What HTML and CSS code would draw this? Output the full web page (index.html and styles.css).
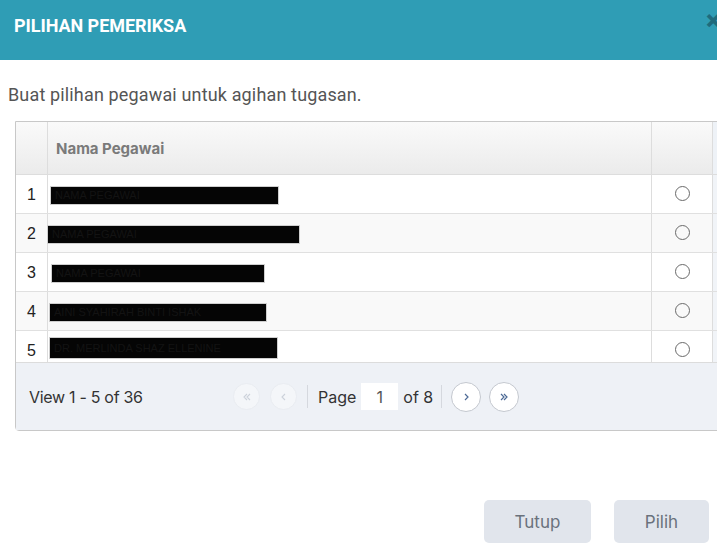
FILE: index.html
```html
<!DOCTYPE html>
<html lang="ms">
<head>
<meta charset="utf-8">
<title>Pilihan Pemeriksa</title>
<link rel="stylesheet" href="styles.css">
</head>
<body>
<div class="modal">
  <div class="modal-header">
    <h4 class="modal-title">PILIHAN PEMERIKSA</h4>
    <span class="close">×</span>
  </div>
  <div class="modal-body">
    <p class="intro">Buat pilihan pegawai untuk agihan tugasan.</p>
    <div class="grid">
      <div class="grid-head">
        <div class="cell c-num"></div>
        <div class="cell c-name">Nama Pegawai</div>
        <div class="cell c-radio"></div>
        <div class="cell c-gutter"></div>
      </div>
      <div class="grid-body">
        <div class="row">
          <div class="cell c-num">1</div>
          <div class="cell c-name"><span class="redact" style="width:227px;margin-left:3px">NAMA PEGAWAI</span></div>
          <div class="cell c-radio"><span class="radio"></span></div>
          <div class="cell c-gutter"></div>
        </div>
        <div class="row alt">
          <div class="cell c-num">2</div>
          <div class="cell c-name"><span class="redact" style="width:251px;margin-left:0">NAMA PEGAWAI</span></div>
          <div class="cell c-radio"><span class="radio"></span></div>
          <div class="cell c-gutter"></div>
        </div>
        <div class="row">
          <div class="cell c-num">3</div>
          <div class="cell c-name"><span class="redact" style="width:212px;margin-left:4px">NAMA PEGAWAI</span></div>
          <div class="cell c-radio"><span class="radio"></span></div>
          <div class="cell c-gutter"></div>
        </div>
        <div class="row alt">
          <div class="cell c-num">4</div>
          <div class="cell c-name"><span class="redact" style="width:216px;margin-left:2px">AINI SYAHIRAH BINTI ISHAK</span></div>
          <div class="cell c-radio"><span class="radio"></span></div>
          <div class="cell c-gutter"></div>
        </div>
        <div class="row">
          <div class="cell c-num">5</div>
          <div class="cell c-name"><span class="redact tall" style="width:227px;margin-left:2px">DR. MERLINDA SHAZ ELLENINE</span></div>
          <div class="cell c-radio"><span class="radio"></span></div>
          <div class="cell c-gutter"></div>
        </div>
      </div>
      <div class="pager">
        <div class="view">View 1 - 5 of 36</div>
        <div class="pager-ctrl">
          <span class="pbtn disabled"><svg width="10" height="10" viewBox="0 0 10 10"><path d="M5 2 L2 5 L5 8 M8 2 L5 5 L8 8" fill="none" stroke="currentColor" stroke-width="1.1"/></svg></span>
          <span class="pbtn disabled"><svg width="10" height="10" viewBox="0 0 10 10"><path d="M6 2 L3 5 L6 8" fill="none" stroke="currentColor" stroke-width="1.1"/></svg></span>
          <span class="sep"></span>
          <span class="plabel">Page</span>
          <span class="pinput">1</span>
          <span class="plabel">of 8</span>
          <span class="sep sep2"></span>
          <span class="pbtn"><svg width="10" height="10" viewBox="0 0 10 10"><path d="M4 2 L7 5 L4 8" fill="none" stroke="currentColor" stroke-width="1.2"/></svg></span>
          <span class="pbtn"><svg width="10" height="10" viewBox="0 0 10 10"><path d="M2 2 L5 5 L2 8 M5 2 L8 5 L5 8" fill="none" stroke="currentColor" stroke-width="1.2"/></svg></span>
        </div>
      </div>
    </div>
  </div>
  <div class="modal-footer">
    <button class="btn btn-close">Tutup</button>
    <button class="btn btn-pick">Pilih</button>
  </div>
</div>
</body>
</html>
```

FILE: styles.css
```css
html, body {
  margin: 0;
  padding: 0;
  width: 717px;
  height: 547px;
  overflow: hidden;
  background: #ffffff;
}

.modal {
  width: 717px;
  font-family: Roboto, "Liberation Sans", sans-serif;
}

.modal-header {
  height: 60px;
  background: #2f9db5;
  display: flex;
  align-items: flex-start;
  justify-content: space-between;
  padding: 0 0 0 14px;
  box-sizing: border-box;
  width: 728px;
}

.modal-title {
  margin: 16px 0 0;
  font-size: 18px;
  line-height: 20px;
  font-weight: 700;
  color: #ffffff;
  letter-spacing: -0.05px;
}

.close {
  margin-top: 7px;
  font-size: 28px;
  line-height: 28px;
  font-weight: 900;
  color: #1f6b7d;
  width: 22px;
}

.modal-body {
  padding: 24px 0 0 0;
}

.intro {
  margin: 0 0 15px 8px;
  font-size: 18px;
  line-height: 22px;
  color: #555555;
  letter-spacing: 0.15px;
}

.grid {
  margin-left: 15px;
  width: 740px;
  border: 1px solid #c8c8c8;
  border-radius: 0 0 0 4px;
  font-family: "Liberation Sans", Arial, sans-serif;
}

.grid-head {
  display: flex;
  height: 53px;
  background: linear-gradient(#fafafa, #ebebeb);
  border-bottom: 1px solid #dddddd;
  box-sizing: border-box;
}

.cell {
  box-sizing: border-box;
  display: flex;
  align-items: center;
}

.c-num {
  width: 32px;
  border-right: 1px solid #dddddd;
  justify-content: center;
  font-size: 16px;
  color: #222222;
  padding-top: 1px;
}

.c-name {
  width: 604px;
  border-right: 1px solid #dddddd;
}

.grid-head .c-name {
  padding-left: 8px;
  font-family: Inter, "Liberation Sans", sans-serif;
  font-size: 15px;
  font-weight: 700;
  color: #7a7a7a;
}

.c-radio {
  width: 61px;
  border-right: 1px solid #dddddd;
  justify-content: center;
}

.c-gutter {
  flex: 1;
  background: #f1f4f8;
}

.grid-head .c-gutter {
  background: #eef2f7;
}

.grid-body {
  height: 187px;
  overflow: hidden;
}

.row {
  display: flex;
  height: 39px;
  border-bottom: 1px solid #e0e0e0;
  box-sizing: border-box;
  background: #ffffff;
}

.row.alt {
  background: #f9f9f9;
}

.redact {
  display: inline-block;
  height: 17px;
  background: #050505;
  color: #131313;
  font-size: 11px;
  line-height: 17px;
  overflow: hidden;
  white-space: nowrap;
  outline: 1px solid #cfcfcf;
  padding-left: 4px;
  box-sizing: border-box;
  margin-top: 2px;
}

.redact.tall {
  height: 20px;
  line-height: 20px;
  align-self: flex-start;
  margin-top: 7px;
}

.radio {
  width: 13px;
  height: 13px;
  border: 1.5px solid #6a6a6a;
  border-radius: 50%;
  margin-left: 1px;
  margin-top: -2px;
}

.pager {
  height: 68px;
  background: #eef1f6;
  border-top: 1px solid #dcdcdc;
  box-sizing: border-box;
  display: flex;
  align-items: center;
  font-family: Inter, "Liberation Sans", sans-serif;
  color: #333333;
  font-size: 16px;
}

.view {
  width: 202px;
  padding-left: 13px;
  box-sizing: border-box;
  letter-spacing: -0.3px;
}

.pager-ctrl {
  display: flex;
  align-items: center;
  margin-left: 15px;
}

.pbtn {
  width: 30px;
  height: 30px;
  box-sizing: border-box;
  border: 1px solid #c4c8cf;
  border-radius: 50%;
  background: #ffffff;
  display: flex;
  align-items: center;
  justify-content: center;
  color: #4d6a96;
  margin-right: 8px;
}

.pbtn.disabled {
  opacity: 0.4;
  border-color: #e2e5ea;
  color: #9aa3b2;
  width: 27px;
  height: 27px;
  margin-right: 10px;
}

.sep {
  width: 1px;
  height: 23px;
  background: #d5d8de;
  margin-right: 10px;
}

.plabel {
  margin-right: 5px;
}

.sep2 {
  margin-left: 3px;
  margin-right: 9px;
}

.pinput {
  width: 37px;
  height: 27px;
  background: #ffffff;
  display: flex;
  align-items: center;
  justify-content: center;
  color: #555555;
  margin-right: 5px;
}

.modal-footer {
  display: flex;
  justify-content: flex-end;
  gap: 23px;
  padding: 69px 8px 0 0;
}

.btn {
  height: 43px;
  border: none;
  border-radius: 5px;
  background: #e1e5ec;
  color: #6a727c;
  font-family: Inter, "Liberation Sans", sans-serif;
  font-size: 17px;
  padding: 0;
}

.btn-close {
  width: 107px;
}

.btn-pick {
  width: 95px;
}
```
